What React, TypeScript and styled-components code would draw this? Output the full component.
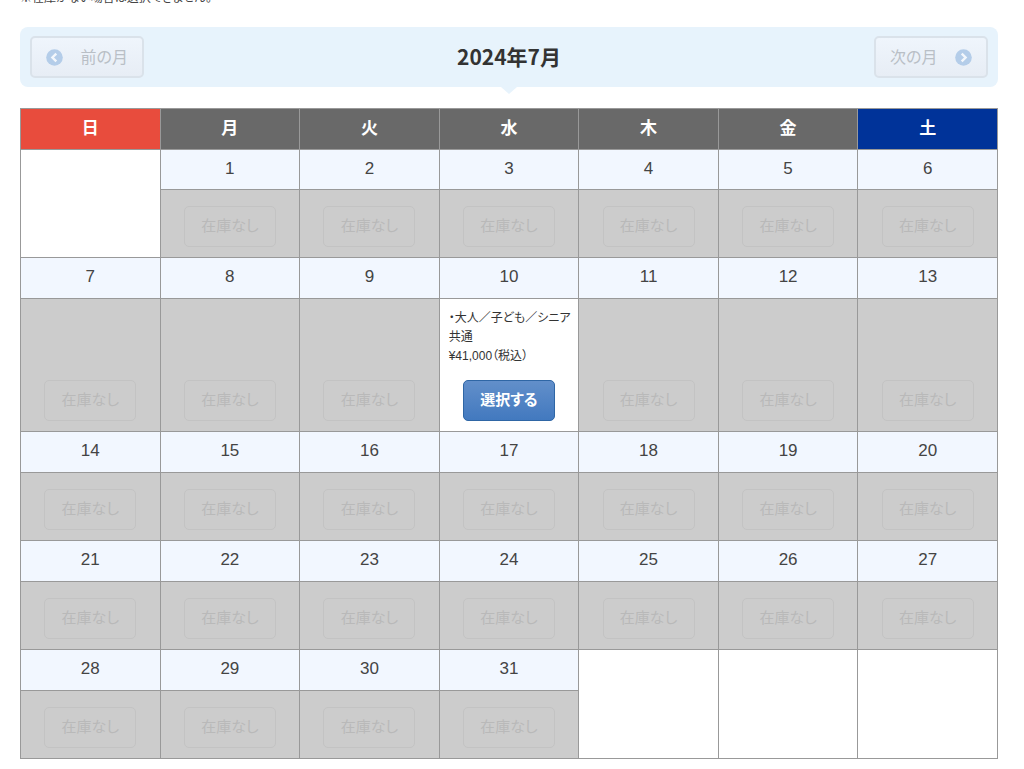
import React from "react";
import styled, { createGlobalStyle, css } from "styled-components";

const GlobalStyle = createGlobalStyle`
  * { box-sizing: border-box; }
  body {
    margin: 0;
    background: #fff;
    color: #444;
    font-family: "Liberation Sans", "Noto Sans CJK JP", sans-serif;
    font-size: 12px;
    line-height: 19px;
    font-feature-settings: "palt";
  }
`;

const Page = styled.main`
  padding: 0 26px 10px 20px;
`;

const Note = styled.p`
  margin: -12px 0 19px;
  line-height: 20px;
`;

const MonthBar = styled.header`
  position: relative;
  display: flex;
  align-items: center;
  justify-content: space-between;
  padding: 9px 10px;
  margin-bottom: 21px;
  border-radius: 8px;
  background: #e7f3fc;

  &::after {
    content: "";
    position: absolute;
    top: 100%;
    left: 50%;
    margin-left: -8px;
    border: 8px solid transparent;
    border-top: 7px solid #e7f3fc;
    border-bottom: 0;
  }
`;

const MonthTitle = styled.h2`
  margin: 0;
  padding-bottom: 2px;
  color: #333;
  font-family: "Noto Sans CJK JP", sans-serif;
  font-size: 21px;
  line-height: 30px;
  font-weight: 700;
  font-feature-settings: normal;
`;

const MonthButton = styled.button`
  display: flex;
  align-items: center;
  justify-content: space-between;
  width: 114px;
  height: 42px;
  padding: 0 14px;
  border: 2px solid #dae2ea;
  border-radius: 5px;
  background: linear-gradient(#eff5fc, #e7edf5);
  color: #b9bfc6;
  font-family: inherit;
  font-size: 16px;
  font-feature-settings: "palt";
`;

const MonthLabel = styled.span`
  padding-bottom: 2px;
`;

const Calendar = styled.table`
  width: 100%;
  table-layout: fixed;
  border-collapse: collapse;
`;

const line = css`
  border: 1px solid #999;
`;

const DayHead = styled.th<{ $color: string }>`
  ${line}
  height: 41px;
  padding: 0 0 2px;
  background: ${(p) => p.$color};
  color: #fff;
  font-size: 17px;
  font-weight: 700;
`;

const DateCell = styled.td<{ $first: boolean }>`
  ${line}
  height: ${(p) => (p.$first ? "40px" : "41px")};
  padding: 0 0 3px;
  background: #f2f7ff;
  font-size: 17px;
  text-align: center;
`;

const BlankCell = styled.td`
  ${line}
  background: #fff;
`;

const StockCell = styled.td<{ $open?: boolean }>`
  ${line}
  padding: ${(p) => (p.$open ? "10px 9px" : "16px 9px 10px")};
  background: ${(p) => (p.$open ? "#fff" : "#ccc")};
  text-align: center;
  vertical-align: bottom;
`;

const Plan = styled.p`
  margin: 0 0 14px;
  color: #333;
  text-align: left;
  white-space: pre;
`;

const StockButton = styled.button`
  display: block;
  width: 92px;
  height: 41px;
  margin: 0 auto;
  padding: 0 0 4px;
  border: 1px solid #2f66a5;
  border-radius: 5px;
  background: linear-gradient(#628fca, #4279bf);
  color: #fff;
  font-family: inherit;
  font-size: 15px;
  font-weight: 700;
  font-feature-settings: "palt";

  &:disabled {
    border-color: #c3c3c3;
    background: transparent;
    color: #b9b9b9;
    font-weight: 400;
  }
`;

const Arrow = ({ next }: { next?: boolean }) => (
  <svg width="17" height="17" viewBox="0 0 17 17" aria-hidden="true">
    <circle cx="8.5" cy="8.5" r="8.3" fill="#b4cde9" />
    <path
      d={next ? "M6.7 4.6 10.6 8.5 6.7 12.4" : "M10.3 4.6 6.4 8.5 10.3 12.4"}
      fill="none"
      stroke="#f3f7fc"
      strokeWidth="2.4"
    />
  </svg>
);

const dayNames = ["日", "月", "火", "水", "木", "金", "土"];
const firstWeekday = 1;
const daysInMonth = 31;
const plans: Record<number, string> = {
  10: "・大人／子ども／シニア\n共通\n¥41,000（税込）",
};

const weeks = Array.from({ length: 5 }, (_, w) =>
  Array.from({ length: 7 }, (_, d) => {
    const day = w * 7 + d - firstWeekday + 1;
    return day >= 1 && day <= daysInMonth ? day : null;
  })
);

const headColor = (i: number) => (i === 0 ? "#e84c3d" : i === 6 ? "#003399" : "#696969");

export default function App() {
  return (
    <>
      <GlobalStyle />
      <Page lang="ja">
        <Note>※在庫がない場合は選択できません。</Note>
        <MonthBar>
          <MonthButton type="button" disabled>
            <Arrow />
            <MonthLabel>前の月</MonthLabel>
          </MonthButton>
          <MonthTitle>2024年7月</MonthTitle>
          <MonthButton type="button" disabled>
            <MonthLabel>次の月</MonthLabel>
            <Arrow next />
          </MonthButton>
        </MonthBar>
        <Calendar>
          <thead>
            <tr>
              {dayNames.map((name, i) => (
                <DayHead key={name} scope="col" $color={headColor(i)}>
                  {name}
                </DayHead>
              ))}
            </tr>
          </thead>
          <tbody>
            {weeks.map((week, w) => (
              <React.Fragment key={w}>
                <tr>
                  {week.map((day, d) =>
                    day ? (
                      <DateCell key={d} $first={w === 0}>
                        {day}
                      </DateCell>
                    ) : (
                      <BlankCell key={d} rowSpan={2} />
                    )
                  )}
                </tr>
                <tr>
                  {week.map((day, d) => {
                    if (!day) return null;
                    const plan = plans[day];
                    return (
                      <StockCell key={d} $open={!!plan}>
                        {plan && <Plan>{plan}</Plan>}
                        <StockButton type="button" disabled={!plan}>
                          {plan ? "選択する" : "在庫なし"}
                        </StockButton>
                      </StockCell>
                    );
                  })}
                </tr>
              </React.Fragment>
            ))}
          </tbody>
        </Calendar>
      </Page>
    </>
  );
}
